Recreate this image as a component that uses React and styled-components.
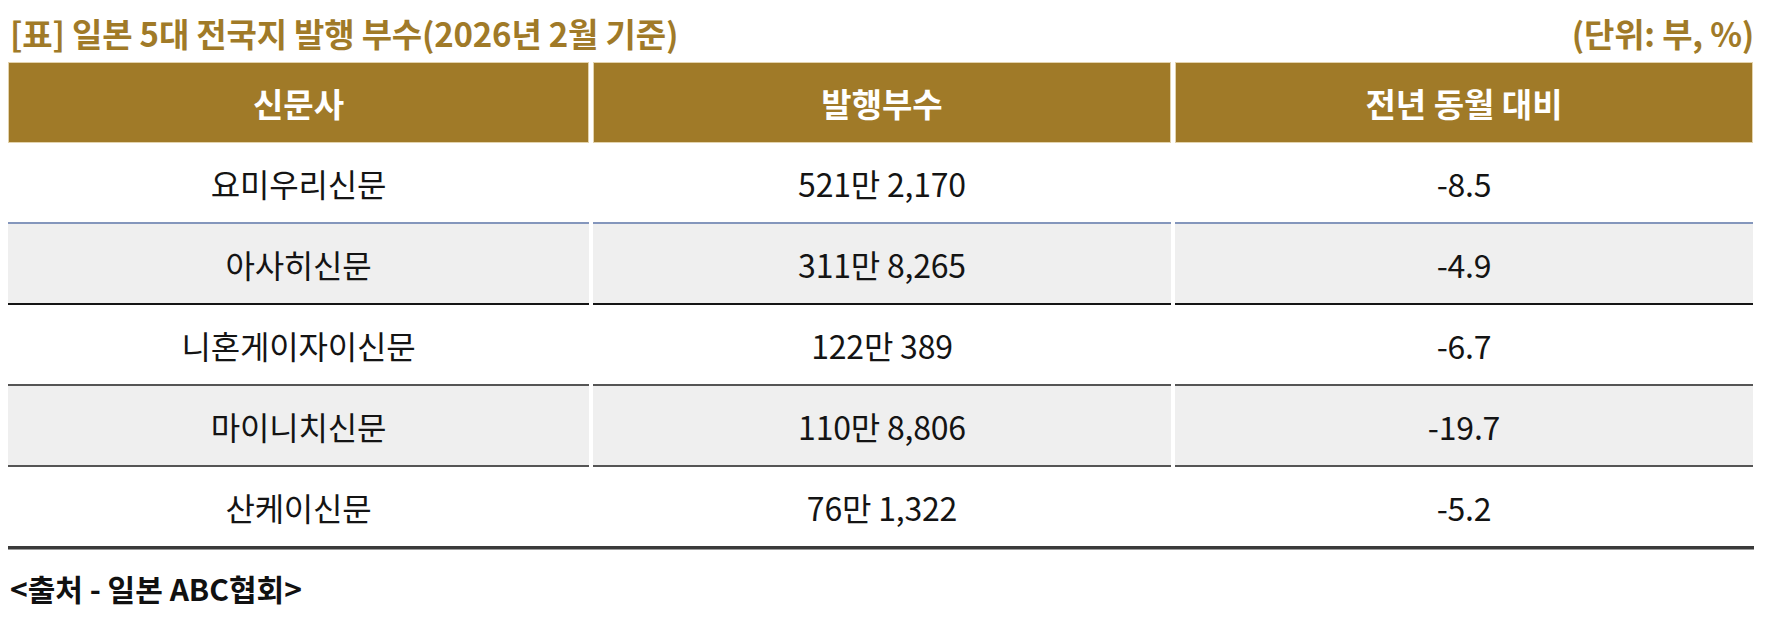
import styled, { createGlobalStyle } from 'styled-components'

const GlobalStyle = createGlobalStyle`
  html, body {
    margin: 0;
    padding: 0;
    background: #ffffff;
  }
  body {
    font-family: 'Noto Sans CJK KR', 'Noto Sans', sans-serif;
  }
`

const GOLD = '#a07a28'

const Page = styled.div`
  width: 1746px;
  padding: 0 12px 0 8px;
`

const TitleBar = styled.div`
  display: flex;
  justify-content: space-between;
  align-items: center;
  height: 62px;
  padding: 4px 0 0 2px;
  box-sizing: border-box;
  color: ${GOLD};
  font-weight: 700;
  font-size: 33px;
  letter-spacing: -0.2px;
`

const Table = styled.div`
  display: grid;
  grid-template-columns: 581px 578px 578px;
  column-gap: 4px;
`

const HeadCell = styled.div`
  height: 81px;
  display: flex;
  align-items: center;
  justify-content: center;
  background: ${GOLD};
  border: 1px solid #e3d3ad;
  box-sizing: border-box;
  color: #ffffff;
  font-weight: 700;
  font-size: 33px;
  letter-spacing: 0;
`

const lines = {
  blue: '2px solid #8496bc',
  black: '2px solid #151515',
  gray: '2px solid #555555',
  none: '0',
}

const Cell = styled.div`
  height: ${(p) => (p.$last ? '79px' : '81px')};
  display: flex;
  align-items: center;
  justify-content: center;
  box-sizing: border-box;
  background: ${(p) => (p.$shaded ? '#efefef' : '#ffffff')};
  border-bottom: ${(p) => lines[p.$line]};
  color: #141414;
  font-size: 32px;
  letter-spacing: -0.2px;
`

const BottomRule = styled.div`
  height: 3px;
  background: #3a3a3a;
  border-bottom: 1px solid #9a9a9a;
`

const Source = styled.div`
  margin-top: 16px;
  padding-left: 2px;
  color: #111111;
  font-weight: 700;
  font-size: 30px;
  letter-spacing: 0;
`

const rows = [
  { name: '요미우리신문', count: '521만 2,170', diff: '-8.5', line: 'blue' },
  { name: '아사히신문', count: '311만 8,265', diff: '-4.9', line: 'black' },
  { name: '니혼게이자이신문', count: '122만 389', diff: '-6.7', line: 'gray' },
  { name: '마이니치신문', count: '110만 8,806', diff: '-19.7', line: 'gray' },
  { name: '산케이신문', count: '76만 1,322', diff: '-5.2', line: 'none' },
]

export default function App() {
  return (
    <Page>
      <GlobalStyle />
      <TitleBar>
        <span>[표] 일본 5대 전국지 발행 부수(2026년 2월 기준)</span>
        <span>(단위: 부, %)</span>
      </TitleBar>
      <Table>
        <HeadCell>신문사</HeadCell>
        <HeadCell>발행부수</HeadCell>
        <HeadCell>전년 동월 대비</HeadCell>
        {rows.map((row, i) =>
          [row.name, row.count, row.diff].map((text, j) => (
            <Cell
              key={i + '-' + j}
              $shaded={i % 2 === 1}
              $line={row.line}
              $last={i === rows.length - 1}
            >
              {text}
            </Cell>
          )),
        )}
      </Table>
      <BottomRule />
      <Source>&lt;출처 - 일본 ABC협회&gt;</Source>
    </Page>
  )
}
